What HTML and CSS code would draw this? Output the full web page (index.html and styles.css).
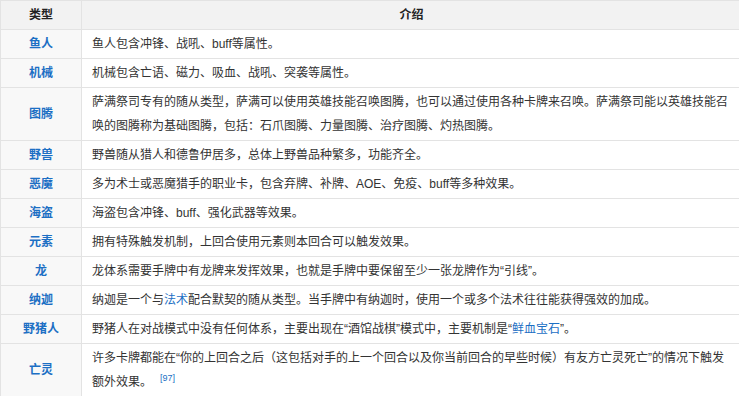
FILE: index.html
```html
<!DOCTYPE html>
<html lang="zh-CN">
<head>
  <meta charset="UTF-8" />
  <meta name="viewport" content="width=device-width, initial-scale=1" />
  <title>随从类型</title>
  <link rel="stylesheet" href="styles.css">
</head>
<body>

  <!-- 随从类型表 -->
  <table class="race-table">
    <colgroup>
      <col class="col-name" />
      <col class="col-desc" />
    </colgroup>
    <thead>
      <tr>
        <th>类型</th>
        <th>介绍</th>
      </tr>
    </thead>
    <tbody>
      <tr>
        <td class="name"><a href="#">鱼人</a></td>
        <td>鱼人包含冲锋、战吼、buff等属性。</td>
      </tr>
      <tr>
        <td class="name"><a href="#">机械</a></td>
        <td>机械包含亡语、磁力、吸血、战吼、突袭等属性。</td>
      </tr>
      <tr>
        <td class="name"><a href="#">图腾</a></td>
        <td>萨满祭司专有的随从类型，萨满可以使用英雄技能召唤图腾，也可以通过使用各种卡牌来召唤。萨满祭司能以英雄技能召唤的图腾称为基础图腾，包括：石爪图腾、力量图腾、治疗图腾、灼热图腾。</td>
      </tr>
      <tr>
        <td class="name"><a href="#">野兽</a></td>
        <td>野兽随从猎人和德鲁伊居多，总体上野兽品种繁多，功能齐全。</td>
      </tr>
      <tr>
        <td class="name"><a href="#">恶魔</a></td>
        <td>多为术士或恶魔猎手的职业卡，包含弃牌、补牌、AOE、免疫、buff等多种效果。</td>
      </tr>
      <tr>
        <td class="name"><a href="#">海盗</a></td>
        <td>海盗包含冲锋、buff、强化武器等效果。</td>
      </tr>
      <tr>
        <td class="name"><a href="#">元素</a></td>
        <td>拥有特殊触发机制，上回合使用元素则本回合可以触发效果。</td>
      </tr>
      <tr>
        <td class="name"><a href="#">龙</a></td>
        <td>龙体系需要手牌中有龙牌来发挥效果，也就是手牌中要保留至少一张龙牌作为“引线”。</td>
      </tr>
      <tr>
        <td class="name"><a href="#">纳迦</a></td>
        <td>纳迦是一个与<a class="link" href="#">法术</a>配合默契的随从类型。当手牌中有纳迦时，使用一个或多个法术往往能获得强效的加成。</td>
      </tr>
      <tr>
        <td class="name"><a href="#">野猪人</a></td>
        <td>野猪人在对战模式中没有任何体系，主要出现在“酒馆战棋”模式中，主要机制是“<a class="link" href="#">鲜血宝石</a>”。</td>
      </tr>
      <tr>
        <td class="name"><a href="#">亡灵</a></td>
        <td>许多卡牌都能在“你的上回合之后（这包括对手的上一个回合以及你当前回合的早些时候）有友方亡灵死亡”的情况下触发额外效果。<sup class="ref"><a href="#">[97]</a></sup></td>
      </tr>
    </tbody>
  </table>

</body>
</html>
```

FILE: styles.css
```css
/* Base */
* {
  box-sizing: border-box;
}
html, body {
  overflow: hidden;
}
body {
  margin: 0;
  background: #ffffff;
  font-family: 'Liberation Sans', 'Noto Sans CJK SC', sans-serif;
  font-size: 12px;
  color: #333333;
}

a {
  color: #1c6fc4;
  text-decoration: none;
}

/* Table */
.race-table {
  border-collapse: collapse;
  table-layout: fixed;
  width: 742px;
}
.col-name {
  width: 81px;
}

.race-table th,
.race-table td {
  border: 1px solid #e3e3e3;
  padding: 2px 10px;
  line-height: 24px;
  vertical-align: middle;
}

.race-table th {
  background: #f2f2f2;
  font-weight: 700;
  color: #222222;
  text-align: center;
}

.race-table td.name {
  background: #f8f8f8;
  text-align: center;
  font-weight: 700;
}

.ref {
  font-size: 9px;
  line-height: 0;
  margin-left: 8px;
  vertical-align: 5px;
}
```
